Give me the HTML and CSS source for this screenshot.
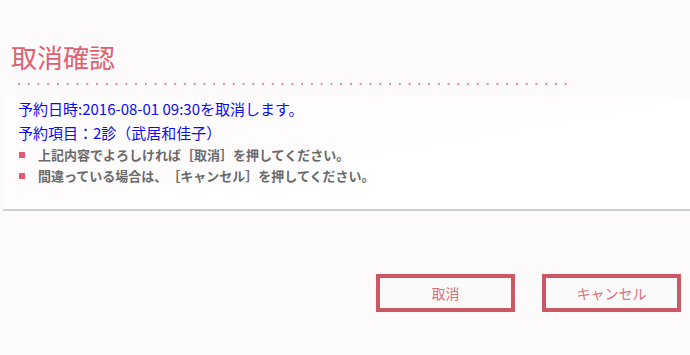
FILE: index.html
```html
<!DOCTYPE html>
<html lang="ja">
<head>
<meta charset="utf-8">
<link rel="stylesheet" href="styles.css">
</head>
<body>
<div class="page">
  <h1 class="title">取消確認</h1>
  <div class="dots"></div>
  <div class="box">
    <p class="info">予約日時:2016-08-01 09:30を取消します。</p>
    <p class="info">予約項目：2診（武居和佳子）</p>
    <ul class="notes">
      <li>上記内容でよろしければ［取消］を押してください。</li>
      <li>間違っている場合は、［キャンセル］を押してください。</li>
    </ul>
  </div>
  <div class="actions">
    <button class="btn">取消</button>
    <button class="btn">キャンセル</button>
  </div>
</div>
</body>
</html>
```
FILE: styles.css
```css
html, body {
  margin: 0;
  padding: 0;
  background: #fdfafb;
  font-family: "Noto Sans CJK JP", "Noto Sans", sans-serif;
  text-spacing-trim: space-all;
}
.page {
  width: 690px;
  height: 355px;
  box-sizing: border-box;
  padding-top: 42px;
}
.title {
  margin: 0 0 0 11px;
  font-size: 26px;
  line-height: 30px;
  font-weight: normal;
  color: #e0606f;
}
.dots {
  margin: 11px 0 0 14px;
  width: 560px;
  height: 2px;
  background-image: radial-gradient(circle, #ee8a98 0.8px, transparent 1px);
  background-size: 9.77px 2px;
}
.box {
  margin: 12px 0 0 3px;
  width: 680px;
  height: 112px;
  background: linear-gradient(170deg, #fefcfd 0%, #fefcfd 45%, #ffffff 55%, #ffffff 100%);
  border-right: 2px solid #c8c8c8;
  border-bottom: 2px solid #d0d0d0;
  padding: 0 0 0 15px;
  box-sizing: content-box;
}
.info {
  margin: 0;
  font-size: 15px;
  line-height: 23px;
  color: #0a0af5;
}
.info + .info {
  padding-top: 1px;
}
.notes {
  list-style: none;
  margin: 0;
  padding: 0;
}
.notes li {
  display: flex;
  align-items: center;
  font-size: 13px;
  line-height: 21px;
  font-weight: bold;
  color: #6a6a6a;
}
.notes li::before {
  content: "";
  width: 6px;
  height: 6px;
  background: #e35b6c;
  margin: 0 13px 0 1px;
  flex: none;
}
.actions {
  display: flex;
  justify-content: flex-end;
  gap: 27px;
  margin-top: 63px;
  padding-right: 9px;
}
.btn {
  width: 139px;
  height: 38px;
  box-sizing: border-box;
  border: 4px solid #cd5865;
  background: #fafafa;
  color: #d9707c;
  font-family: "Noto Sans CJK JP", "Noto Sans", sans-serif;
  font-size: 14px;
  padding: 0;
}
```
